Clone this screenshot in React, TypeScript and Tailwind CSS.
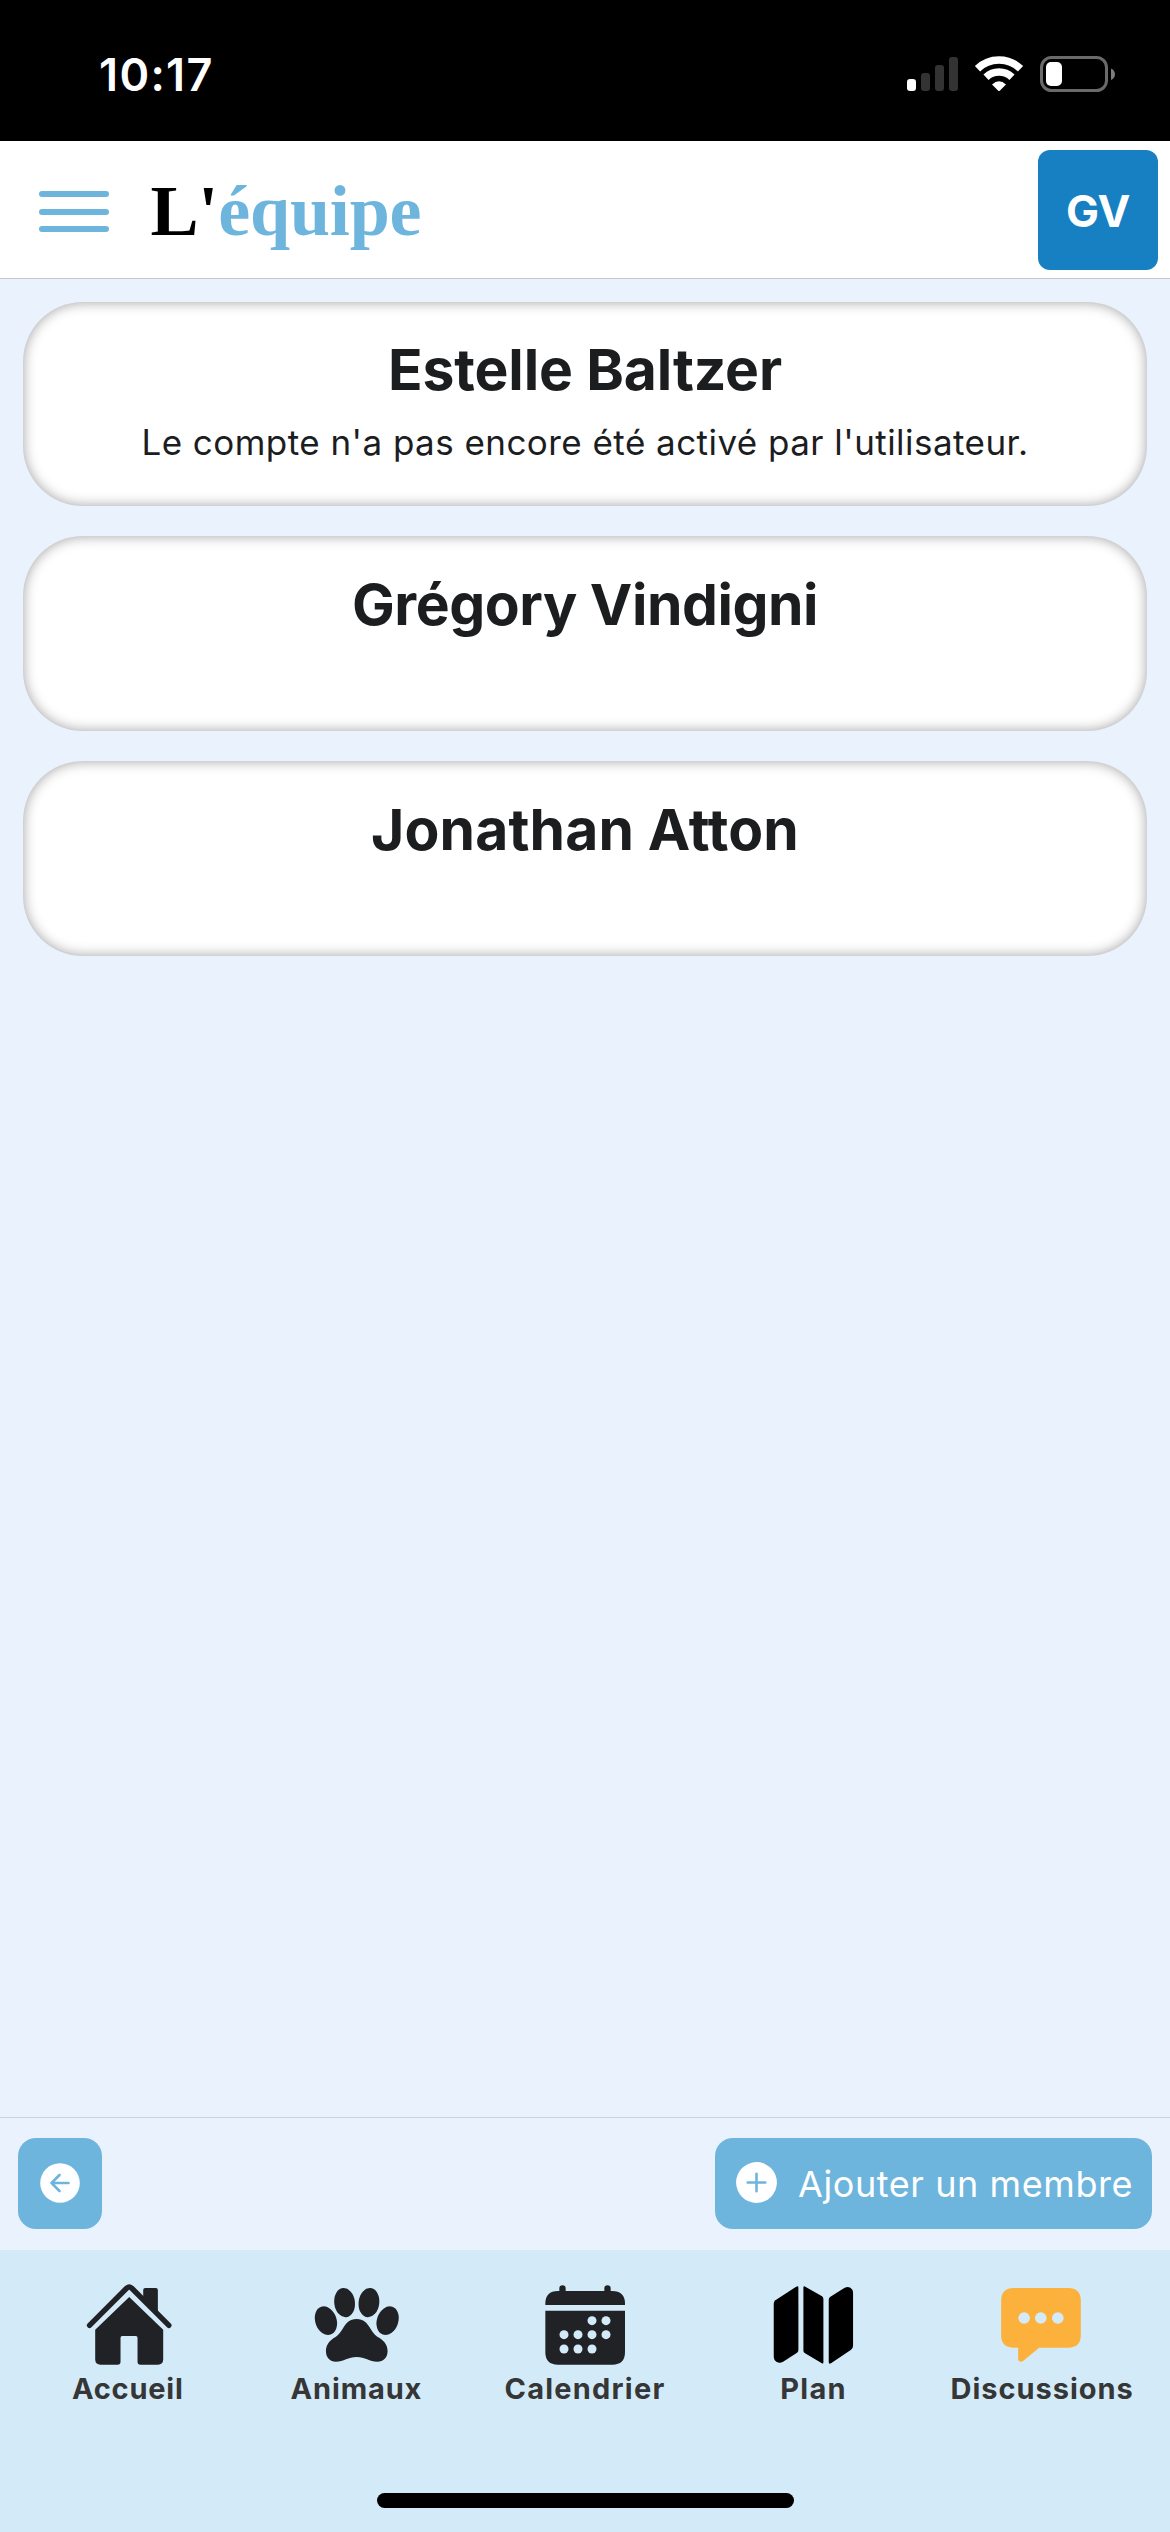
import type { ReactNode } from 'react'

interface Member {
  name: string
  note?: string
  tracking: string
  size: string
}

interface Tab {
  label: string
  tracking: string
  icon: ReactNode
}

const members: Member[] = [
  {
    name: 'Estelle Baltzer',
    note: "Le compte n'a pas encore été activé par l'utilisateur.",
    tracking: 'tracking-[-0.11px]',
    size: 'h-[204px] pt-[34px]',
  },
  { name: 'Grégory Vindigni', tracking: 'tracking-[-0.45px]', size: 'h-[195px] pt-[35px]' },
  { name: 'Jonathan Atton', tracking: 'tracking-[0.13px]', size: 'h-[195px] pt-[35px]' },
]

function HomeIcon() {
  return (
    <svg viewBox="89.4 51 288 288" className="size-24" fill="#212226">
      <path d="M118 196 L230 84 Q237 78 244 84 L356 196" fill="none" stroke="#212226" strokeWidth="16" strokeLinecap="round" strokeLinejoin="round" />
      <path d="M279 112V90q0-6 6-6h32q6 0 6 6v66z" />
      <path d="M237 111L339 209V298q0 16-16 16H271q-9 0-9-9V233q0-5-5-5H216q-5 0-5 5v72q0 9-9 9H151q-16 0-16-16V209z" />
    </svg>
  )
}

function PawIcon() {
  return (
    <svg viewBox="775.2 51 288 288" className="size-24" fill="#212226">
      <ellipse cx="829" cy="182" rx="32" ry="44" transform="rotate(-19 829 182)" />
      <ellipse cx="885" cy="128" rx="31" ry="44" transform="rotate(-7 885 128)" />
      <ellipse cx="958" cy="128" rx="31" ry="44" transform="rotate(7 958 128)" />
      <ellipse cx="1014" cy="182" rx="32" ry="44" transform="rotate(19 1014 182)" />
      <path d="M921 177C942 177 952 189 960 202C967 213 973 224 983 230C998 238 1014 250 1014 273C1014 293 1002 305 983 305C960 305 946 291 921 291C896 291 882 305 859 305C841 305 829 293 829 273C829 250 845 238 859 230C869 224 875 213 882 202C890 189 900 177 921 177z" />
    </svg>
  )
}

function CalendarIcon() {
  const days = [
    [336, 182], [378, 182],
    [252, 224], [294, 224], [336, 224], [378, 224],
    [252, 267], [294, 267], [336, 267],
  ]
  return (
    <svg viewBox="171 51 288 288" className="size-24" fill="#212226">
      <path d="M196 135v-4q0-38 38-38h4v-8a9.5 9.5 0 0119 0v8H373v-8a9.5 9.5 0 0119 0v8h4q39 0 39 38v4z" />
      <path d="M196 152H435V276q0 38-38 38H234q-38 0-38-38z" />
      {days.map(([x, y]) => (
        <circle key={`${x}-${y}`} cx={x} cy={y} r="13.5" fill="#d3ebf9" />
      ))}
    </svg>
  )
}

function MapIcon() {
  return (
    <svg viewBox="856.8 51 288 288" className="size-24" fill="#000">
      <path d="M946 81q8-5 8 2V270q0 5-4 8L908 305q-10 6-20 0-8-5-8-14V131q0-6 5-10z" />
      <path d="M969 83q0-7 7-2L1025 109q4 3 4 8V307q0 6-6 2L974 280q-5-3-5-8z" />
      <path d="M1045 119q0-6 5-9L1088 86q11-8 22-3 8 5 8 15V257q0 9-7 13L1053 309q-8 5-8-3z" />
    </svg>
  )
}

function ChatIcon() {
  return (
    <svg viewBox="282.6 51 288 288" className="size-24" fill="#fdb13d">
      <path d="M342 84H505q38 0 38 38V225q0 38-38 38H418L371 302q-8 6-14 0-2-2-2-6V263H342q-38 0-38-38V122q0-38 38-38z" />
      <circle cx="373" cy="174" r="17.5" fill="#d3ebf9" />
      <circle cx="423" cy="174" r="17.5" fill="#d3ebf9" />
      <circle cx="474" cy="174" r="17.5" fill="#d3ebf9" />
    </svg>
  )
}

const tabs: Tab[] = [
  { label: 'Accueil', tracking: 'tracking-[0.78px]', icon: <HomeIcon /> },
  { label: 'Animaux', tracking: 'tracking-[0.85px]', icon: <PawIcon /> },
  { label: 'Calendrier', tracking: 'tracking-[1.23px]', icon: <CalendarIcon /> },
  { label: 'Plan', tracking: 'tracking-[1.27px]', icon: <MapIcon /> },
  { label: 'Discussions', tracking: 'tracking-[0.97px]', icon: <ChatIcon /> },
]

function StatusBar() {
  return (
    <div className="flex h-[141px] shrink-0 justify-between bg-black pr-[54px] pl-[99px] text-white">
      <span className="mt-[50px] text-[45px] leading-[50px] font-semibold tracking-[1.35px]">10:17</span>
      <svg viewBox="0 0 210 36" className="mt-14 h-9 w-[210px]">
        <g fill="#333">
          <rect x="15" y="17" width="9" height="18" rx="3" />
          <rect x="29" y="9" width="9" height="26" rx="3" />
          <rect x="43" y="1" width="9" height="34" rx="3" />
        </g>
        <rect x="1" y="23" width="9" height="12" rx="3" fill="#fff" />
        <g fill="none" stroke="#fff" strokeWidth="7.5">
          <path d="M71.5 12.7A31 31 0 01114.5 12.7" />
          <path d="M80 21.2A19 19 0 01106 21.2" />
        </g>
        <path d="M86 28.5Q93 22 100 28.5L94 34.5Q93 35.5 92 34.5z" fill="#fff" />
        <rect x="135.5" y="1.5" width="65" height="33" rx="10" fill="none" stroke="#6a6a6a" strokeWidth="3" />
        <rect x="140" y="6" width="16" height="24" rx="5" fill="#fff" />
        <path d="M205 12.5q4 2 4 5.8t-4 5.8z" fill="#7d7d7d" />
      </svg>
    </div>
  )
}

function Header() {
  return (
    <header className="flex h-[138px] shrink-0 items-center border-b border-[#c8c7cc] bg-white pr-3 pl-[38.5px]">
      <button className="mt-1 flex w-[70px] flex-col gap-[11.5px]">
        <span className="h-[6px] rounded-full bg-[#6eb5dd]" />
        <span className="h-[6px] rounded-full bg-[#6eb5dd]" />
        <span className="h-[6px] rounded-full bg-[#6eb5dd]" />
      </button>
      <h1 className="mt-0.5 ml-[42px] font-['Liberation_Serif',serif] text-[72px] leading-[80px] font-bold tracking-[-0.16px] text-black">
        L'<span className="text-[#6eb5dd]">équipe</span>
      </h1>
      <div className="ml-auto flex size-[120px] items-center justify-center rounded-xl bg-[#1780c2] pt-0.5 text-[44px] font-bold tracking-[-0.33px] text-white">
        GV
      </div>
    </header>
  )
}

function MemberCard({ member }: { member: Member }) {
  return (
    <div
      className={`rounded-[60px] bg-white text-center text-[#1c1d1f] shadow-[inset_0_0_13px_rgba(0,0,0,0.38)] ${member.size}`}
    >
      <h2 className={`text-[57px] leading-[68px] font-bold ${member.tracking}`}>{member.name}</h2>
      {member.note && <p className="mt-[15px] text-[35px] leading-[46px] tracking-[0.45px]">{member.note}</p>}
    </div>
  )
}

function Toolbar() {
  return (
    <div className="flex h-[133px] shrink-0 items-start justify-between border-t border-[#c9d3dd] px-[18px] pt-5">
      <button className="flex h-[91px] w-[84px] items-center justify-center rounded-[18px] bg-[#6eb5dd]">
        <svg viewBox="0 0 40 40" className="-mt-0.5 size-10">
          <circle cx="20" cy="20" r="19.8" fill="#fff" />
          <path d="M28.5 20H11.5M19.5 12L11.5 20L19.5 28" fill="none" stroke="#6eb5dd" strokeWidth="2.6" strokeLinecap="round" strokeLinejoin="round" />
        </svg>
      </button>
      <button className="flex h-[91px] w-[437px] items-center rounded-[18px] bg-[#6eb5dd] pl-[21px] text-white">
        <svg viewBox="0 0 41 41" className="-mt-0.5 size-[41px]">
          <circle cx="20.5" cy="20.5" r="20.4" fill="#fff" />
          <path d="M11.7 20.5H29.3M20.5 11.7V29.3" stroke="#6eb5dd" strokeWidth="2.6" strokeLinecap="round" />
        </svg>
        <span className="ml-[21px] text-4xl tracking-[0.58px] whitespace-nowrap">Ajouter un membre</span>
      </button>
    </div>
  )
}

function TabBar() {
  return (
    <nav className="flex h-[282px] shrink-0 flex-col items-center justify-between bg-[#d3ebf9] pt-[27px] pb-6">
      <div className="flex w-[1143px]">
        {tabs.map((tab) => (
          <div key={tab.label} className="flex flex-1 flex-col items-center">
            {tab.icon}
            <span className={`mt-px text-[29px] leading-[30px] font-bold text-[#363636] ${tab.tracking}`}>
              {tab.label}
            </span>
          </div>
        ))}
      </div>
      <div className="h-[15px] w-[417px] rounded-full bg-black" />
    </nav>
  )
}

function App() {
  return (
    <div className="flex h-[2532px] w-[1170px] flex-col overflow-hidden bg-[#eaf3fd] font-[Inter,sans-serif]">
      <StatusBar />
      <Header />
      <main className="flex flex-1 flex-col gap-[30px] px-[23px] pt-[23px]">
        {members.map((member) => (
          <MemberCard key={member.name} member={member} />
        ))}
      </main>
      <Toolbar />
      <TabBar />
    </div>
  )
}

export default App
